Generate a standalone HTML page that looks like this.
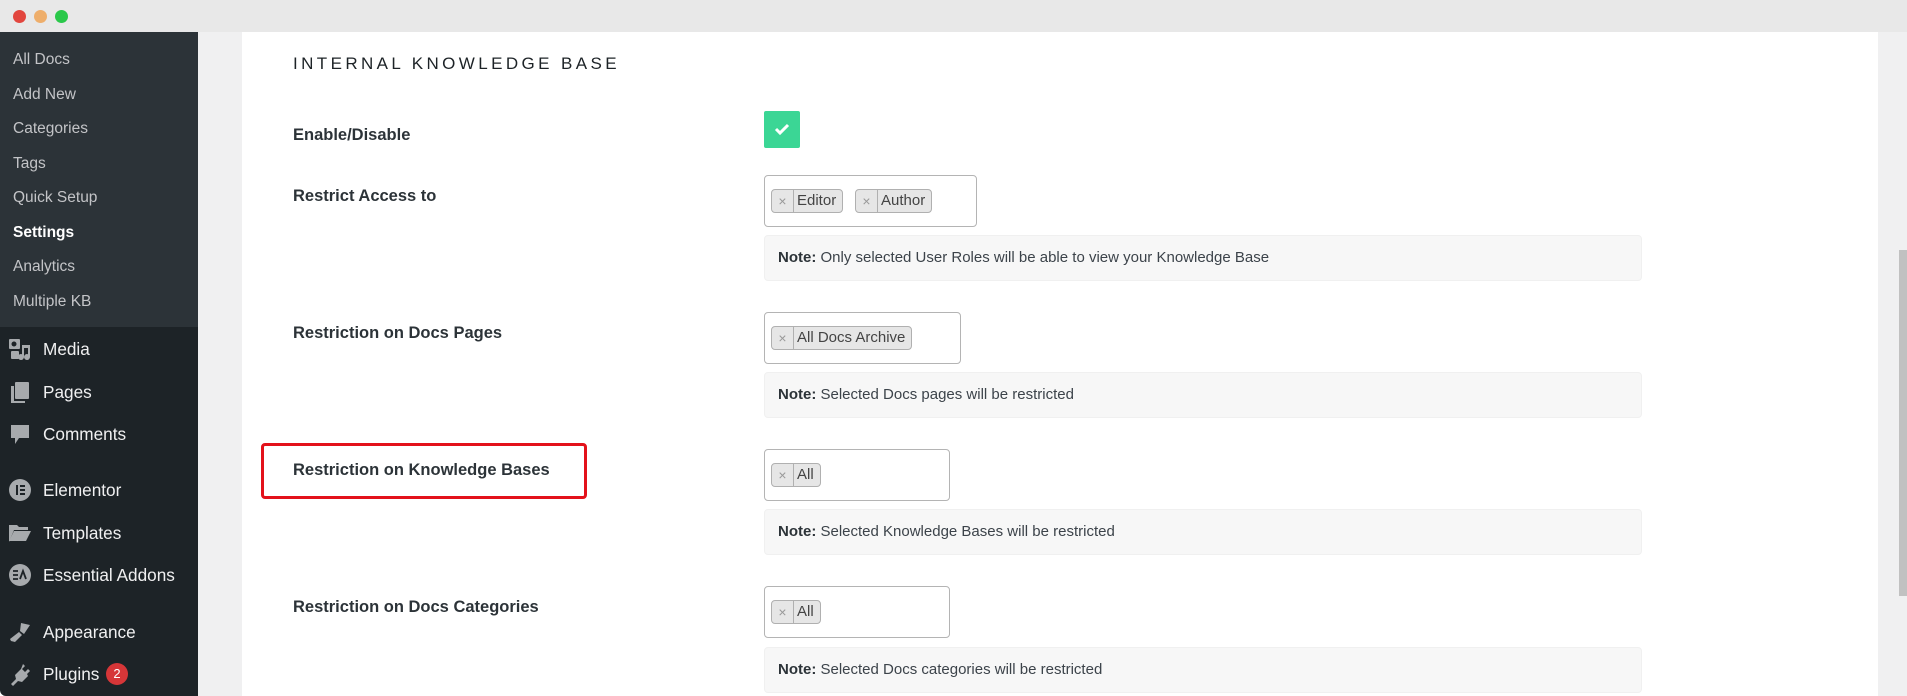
<!DOCTYPE html>
<html><head><meta charset="utf-8"><style>
*{margin:0;padding:0;box-sizing:border-box}
body{width:1907px;height:696px;position:relative;overflow:hidden;background:#fff;font-family:"Liberation Sans",sans-serif}
.a{position:absolute}
.top{left:0;top:0;width:1907px;height:32px;background:#e8e8e8}
.dot{top:10px;width:13px;height:13px;border-radius:50%}
.side{left:0;top:32px;width:198px;height:664px;background:#1d2327;border-bottom-left-radius:6px}
.sub{left:0;top:32px;width:198px;height:295px;background:#2c3338}
.si{left:13px;color:#c3c4c7;font-size:15.5px;line-height:20px}
.mi{left:43px;color:#f0f0f1;font-size:17.2px;line-height:22px}
.ic{left:8px;width:24px;height:24px}
.lbl{left:293px;color:#2c3338;font-weight:bold;font-size:16.5px;line-height:20px}
.sel{left:764px;height:52px;border:1px solid #b4b4b4;border-radius:4px;background:#fff}
.tag{top:13px;height:24px;border:1px solid #b0b0b0;border-radius:4px;background:#e6e6e6;font-size:15px;color:#444;line-height:22px;display:flex}
.tag .x{width:22px;border-right:1px solid #b0b0b0;text-align:center;color:#999;font-size:14px}
.tag .t{padding:0 6px 0 3px}
.note{left:764px;width:878px;height:46px;background:#f7f7f7;border:1px solid #f0f0f0;border-radius:4px;font-size:15px;color:#3c434a;line-height:44px;padding-left:13px}
.note b{color:#2c3338}
</style></head><body>
<div class="a top"></div>
<div class="a dot" style="left:13px;background:#e2463e"></div>
<div class="a dot" style="left:34px;background:#eeae6b"></div>
<div class="a dot" style="left:55px;background:#2ac84a"></div>
<div class="a side"></div>
<div class="a sub"></div>
<div class="a si" style="top:50px">All Docs</div>
<div class="a si" style="top:85px">Add New</div>
<div class="a si" style="top:119px">Categories</div>
<div class="a si" style="top:154px">Tags</div>
<div class="a si" style="top:188px">Quick Setup</div>
<div class="a si" style="top:223px;color:#fff;font-weight:bold">Settings</div>
<div class="a si" style="top:257px">Analytics</div>
<div class="a si" style="top:292px">Multiple KB</div>

<svg class="a ic" style="top:337px" viewBox="0 0 24 24" fill="#a7aaad"><rect x="1" y="2" width="11" height="10" rx="1"/><circle cx="6" cy="7" r="2.5" fill="#1d2327"/><path d="M14 8h8v12a3 3 0 1 1-2-2.8V11h-4v9a3 3 0 1 1-2-2.8z"/><rect x="3" y="14" width="8" height="8" rx="1"/></svg>
<div class="a mi" style="top:338px">Media</div>
<svg class="a ic" style="top:380px" viewBox="0 0 24 24" fill="#a7aaad"><rect x="7" y="2" width="14" height="17" rx="1"/><path d="M3 6h3v15h11v2H3z"/></svg>
<div class="a mi" style="top:381px">Pages</div>
<svg class="a ic" style="top:422px" viewBox="0 0 24 24" fill="#a7aaad"><path d="M3 3h18v13H11l-4 6v-6H3z" /></svg>
<div class="a mi" style="top:423px">Comments</div>
<svg class="a ic" style="top:478px" viewBox="0 0 24 24"><circle cx="12" cy="12" r="11" fill="#a7aaad"/><rect x="8" y="7" width="2" height="10" fill="#1d2327"/><rect x="12" y="7" width="5" height="2" fill="#1d2327"/><rect x="12" y="11" width="5" height="2" fill="#1d2327"/><rect x="12" y="15" width="5" height="2" fill="#1d2327"/></svg>
<div class="a mi" style="top:479px">Elementor</div>
<svg class="a ic" style="top:521px" viewBox="0 0 24 24" fill="#a7aaad"><path d="M1 4h8l2 2h9v3H6l-5 12z"/><path d="M6 10h17l-5 10H1z"/></svg>
<div class="a mi" style="top:522px">Templates</div>
<svg class="a ic" style="top:563px" viewBox="0 0 24 24"><circle cx="12" cy="12" r="11" fill="#a7aaad"/><path d="M5 8h5M5 12h5M5 16h5M12 16l3-8 3 8" stroke="#1d2327" stroke-width="1.8" fill="none"/></svg>
<div class="a mi" style="top:564px">Essential Addons</div>
<svg class="a ic" style="top:620px" viewBox="0 0 24 24" fill="#a7aaad"><path d="M13 3l9 2-6 9-4-3z"/><path d="M11 12l3 3-7 7-4-1-1-2z"/></svg>
<div class="a mi" style="top:621px">Appearance</div>
<svg class="a ic" style="top:662px" viewBox="0 0 24 24" fill="#a7aaad"><path d="M15 2l2 2-3 3 3 3 3-3 2 2-3 3 1 2-6 6-4-1-5 5-2-2 5-5-1-4 6-6z"/></svg>
<div class="a mi" style="top:663px">Plugins</div>
<div class="a" style="left:106px;top:663px;width:22px;height:22px;border-radius:50%;background:#d63638;color:#fff;font-size:13px;text-align:center;line-height:22px">2</div>

<div class="a" style="left:198px;top:32px;width:44px;height:664px;background:#f0f0f1"></div>
<div class="a" style="left:1878px;top:32px;width:29px;height:664px;background:#f0f0f1"></div>
<div class="a" style="left:1899px;top:250px;width:8px;height:346px;background:#c1c1c1"></div>

<div class="a" style="left:293px;top:54px;font-size:17px;letter-spacing:3.4px;color:#1d2327;line-height:20px">INTERNAL KNOWLEDGE BASE</div>

<div class="a lbl" style="top:125px">Enable/Disable</div>
<div class="a lbl" style="top:186px">Restrict Access to</div>
<div class="a lbl" style="top:323px">Restriction on Docs Pages</div>
<div class="a lbl" style="top:460px">Restriction on Knowledge Bases</div>
<div class="a lbl" style="top:597px">Restriction on Docs Categories</div>
<div class="a" style="left:261px;top:443px;width:326px;height:56px;border:3px solid #e3121b;border-radius:4px"></div>

<div class="a" style="left:764px;top:111px;width:36px;height:37px;background:#3bd695;border-radius:2px"></div>
<svg class="a" style="left:772px;top:119px" width="20" height="20" viewBox="0 0 20 20"><path d="M4 10l4 4 8-8" stroke="#fff" stroke-width="3" fill="none"/></svg>

<div class="a sel" style="top:175px;width:213px">
 <div class="a tag" style="left:6px"><span class="x">×</span><span class="t">Editor</span></div>
 <div class="a tag" style="left:90px"><span class="x">×</span><span class="t">Author</span></div>
</div>
<div class="a note" style="top:235px"><b>Note:</b> Only selected User Roles will be able to view your Knowledge Base</div>

<div class="a sel" style="top:312px;width:197px">
 <div class="a tag" style="left:6px"><span class="x">×</span><span class="t">All Docs Archive</span></div>
</div>
<div class="a note" style="top:372px"><b>Note:</b> Selected Docs pages will be restricted</div>

<div class="a sel" style="top:449px;width:186px">
 <div class="a tag" style="left:6px"><span class="x">×</span><span class="t">All</span></div>
</div>
<div class="a note" style="top:509px"><b>Note:</b> Selected Knowledge Bases will be restricted</div>

<div class="a sel" style="top:586px;width:186px">
 <div class="a tag" style="left:6px"><span class="x">×</span><span class="t">All</span></div>
</div>
<div class="a note" style="top:647px"><b>Note:</b> Selected Docs categories will be restricted</div>
</body></html>
